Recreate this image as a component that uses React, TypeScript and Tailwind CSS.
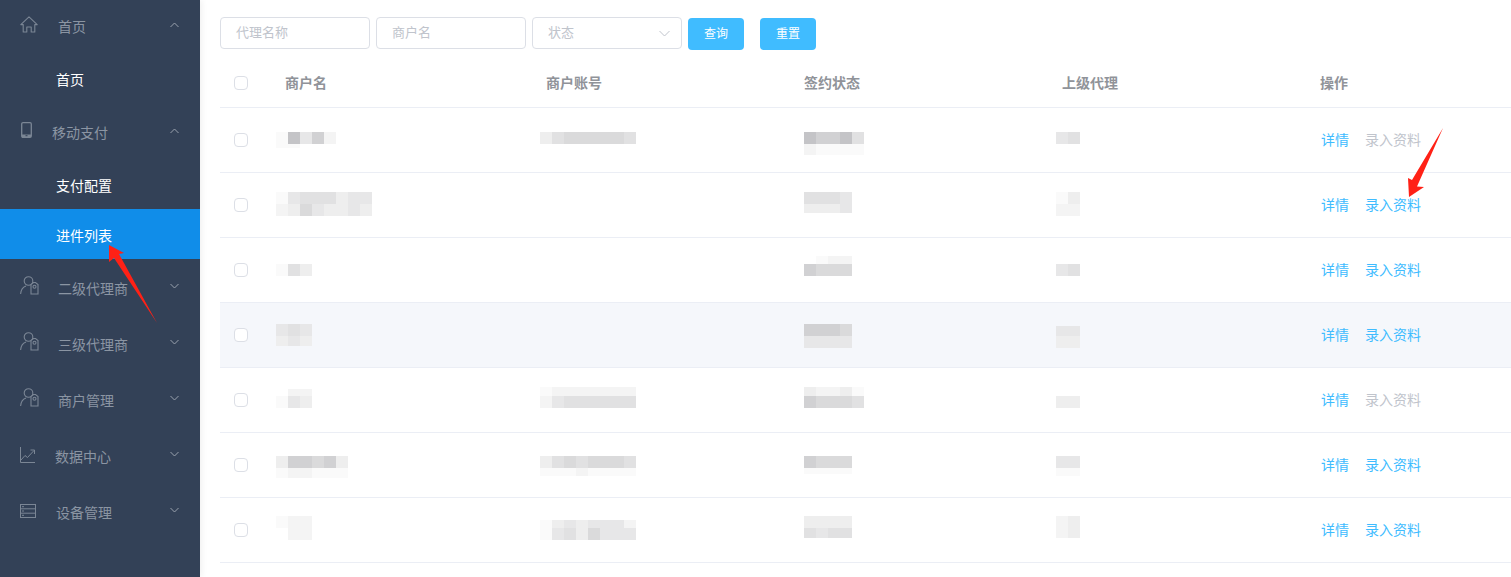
import type { ReactNode } from "react";

const FONT = "font-['Liberation_Sans','Noto_Sans_CJK_SC',sans-serif]";

const tones: Record<string, string> = {
  "0": "bg-transparent",
  a: "bg-[#fafafa]",
  b: "bg-[#f4f4f4]",
  c: "bg-[#eeeeee]",
  d: "bg-[#e7e7e8]",
  e: "bg-[#e1e1e2]",
  f: "bg-[#dadadb]",
  g: "bg-[#d1d1d3]",
  h: "bg-[#c4c4c7]",
};

const heights: Record<string, string> = {
  "4": "h-1",
  "6": "h-1.5",
  "7": "h-[7px]",
  "8": "h-2",
  "9": "h-[9px]",
  "10": "h-2.5",
  "11": "h-[11px]",
  "12": "h-3",
};

// each row is "height:cells", one letter for a 12px mosaic square
function Blur({ rows, className }: { rows: string[]; className: string }) {
  return (
    <div className={className}>
      {rows.map((row, i) => {
        const [h, cells] = row.split(":");
        return (
          <div key={i} className={`flex ${heights[h]}`}>
            {cells.split("").map((c, j) => (
              <div key={j} className={`w-3 ${tones[c]}`} />
            ))}
          </div>
        );
      })}
    </div>
  );
}

const rows = [
  {
    name: { top: "mt-6", rows: ["12:ahdgb", "4:aa"] },
    account: { top: "mt-6", rows: ["12:cefffffe"] },
    status: { top: "mt-6", rows: ["12:hgghe", "11:baaaa"] },
    agent: { top: "mt-6", rows: ["12:de"] },
    active: false,
  },
  {
    name: { top: "mt-[19px]", rows: ["12:adeeecdd", "12:bcfdccdc"] },
    account: null,
    status: { top: "mt-[19px]", rows: ["12:eeed", "9:cccd"] },
    agent: { top: "mt-[19px]", rows: ["12:ac", "12:bb"] },
    active: true,
  },
  {
    name: { top: "mt-[26px]", rows: ["12:aec"] },
    account: null,
    status: { top: "mt-[18px]", rows: ["8:0abb", "12:gfff"] },
    agent: { top: "mt-[26px]", rows: ["12:de"] },
    active: true,
  },
  {
    name: { top: "mt-[21px]", rows: ["12:ded", "10:cdc"] },
    account: null,
    status: { top: "mt-[21px]", rows: ["12:gggf", "12:dddd"] },
    agent: { top: "mt-[23px]", rows: ["10:dd", "12:cc"] },
    active: true,
  },
  {
    name: { top: "mt-[21px]", rows: ["7:0bb", "12:adc"] },
    account: { top: "mt-[19px]", rows: ["9:abbbbbbb", "12:bdeeeeee"] },
    status: { top: "mt-[19px]", rows: ["9:cbbca", "12:gfffe"] },
    agent: { top: "mt-7", rows: ["12:cc"] },
    active: false,
  },
  {
    name: { top: "mt-[23px]", rows: ["12:cggfgc", "10:abbaaa"] },
    account: { top: "mt-[23px]", rows: ["12:cefefffe", "8:aaabaaaa"] },
    status: { top: "mt-[23px]", rows: ["12:gfff", "6:aaaa"] },
    agent: { top: "mt-[23px]", rows: ["12:dd", "8:aa"] },
    active: true,
  },
  {
    name: { top: "mt-[18px]", rows: ["12:abb", "12:0bb"] },
    account: { top: "mt-[22px]", rows: ["8:acdcdddb", "12:adecfddd"] },
    status: { top: "mt-[18px]", rows: ["12:cccc", "10:edee"] },
    agent: { top: "mt-[18px]", rows: ["12:bc", "10:bc"] },
    active: true,
  },
];

const HomeIcon = () => (
  <svg width="18" height="17" viewBox="0 0 18 17" fill="none" stroke="#7b8695" strokeWidth="1.1">
    <path d="M.8 8.6 9 .8l8.200 7.800h-2.400v7.400h-3.600v-5H6.800v5H3.200V8.600z" strokeLinejoin="round" />
  </svg>
);

const PhoneIcon = () => (
  <svg width="11" height="16" viewBox="0 0 11 16" fill="none">
    <rect x=".7" y=".7" width="9.600" height="14.600" rx="1.300" stroke="#7b8695" strokeWidth="1.300" />
    <path d="M1 12.500h9V15H1z" fill="#7b8695" />
    <path d="M4.500 13.700h2" stroke="#334157" />
  </svg>
);

const AgentIcon = () => (
  <svg width="19" height="19" viewBox="0 0 19 19" fill="none" stroke="#7b8695" strokeWidth="1.100">
    <circle cx="8.500" cy="5" r="4.300" />
    <path d="M.6 18c.3-4.200 2.500-7 5.400-8" />
    <path d="M11 8.500l2.500-2 2 0 2.500 2V18h-7z" fill="#334157" />
    <circle cx="14.500" cy="10.800" r="1.500" />
  </svg>
);

const ChartIcon = () => (
  <svg width="16" height="16" viewBox="0 0 16 16" fill="none" stroke="#7b8695" strokeWidth="1">
    <path d="M.5 0v15.500H15" />
    <path d="M1 13l4-4.500 2.500 2L14 3.500M10.500 3h4v4" />
  </svg>
);

const ServerIcon = () => (
  <svg width="16" height="14" viewBox="0 0 16 14" fill="none" stroke="#7b8695" strokeWidth="1">
    <rect x=".5" y=".5" width="15" height="13" />
    <path d="M.5 4.800h15M.5 9.200h15" />
    <path d="M2 2.700h2M2 7h2M2 11.300h2" />
  </svg>
);

function Chevron({ up }: { up?: boolean }) {
  return (
    <svg width="9" height="6" viewBox="0 0 9 6" fill="none" stroke="#9aa2ae" strokeWidth="1">
      <path d={up ? "M.5 5 4.500 1l4 4" : "M.5 1l4 4 4-4"} />
    </svg>
  );
}

function MenuHead({ icon, label, slot, up }: { icon: ReactNode; label: string; slot: string; up?: boolean }) {
  return (
    <div className="flex h-14 pr-[21px] text-sm text-[#8b95a3]">
      <div className={`${slot} shrink-0 pl-5`}>{icon}</div>
      <div className="flex-1 pt-[20px] leading-[20px] whitespace-nowrap">{label}</div>
      <div className={up ? "pt-[25px]" : "pt-6"}>
        <Chevron up={up} />
      </div>
    </div>
  );
}

function SubItem({ label, active }: { label: string; active?: boolean }) {
  return (
    <div className={`h-[50px] pl-14 text-sm leading-[54px] text-white ${active ? "bg-[#108de9]" : ""}`}>{label}</div>
  );
}

function Sidebar() {
  return (
    <aside className="w-[200px] shrink-0 bg-[#334157] overflow-hidden shadow-[2px_0_6px_rgba(0,0,0,0.06)]">
      <div className="-mt-[3px]">
        <MenuHead icon={<div className="pt-[19px]"><HomeIcon /></div>} label="首页" slot="w-[58px]" up />
        <SubItem label="首页" />
        <MenuHead icon={<div className="pl-px pt-[19px]"><PhoneIcon /></div>} label="移动支付" slot="w-[52px]" up />
        <SubItem label="支付配置" />
        <SubItem label="进件列表" active />
        <MenuHead icon={<div className="pt-[17px]"><AgentIcon /></div>} label="二级代理商" slot="w-[58px]" />
        <MenuHead icon={<div className="pt-[17px]"><AgentIcon /></div>} label="三级代理商" slot="w-[58px]" />
        <MenuHead icon={<div className="pt-[17px]"><AgentIcon /></div>} label="商户管理" slot="w-[58px]" />
        <MenuHead icon={<div className="pt-5"><ChartIcon /></div>} label="数据中心" slot="w-[55px]" />
        <MenuHead icon={<div className="pt-[21px]"><ServerIcon /></div>} label="设备管理" slot="w-14" />
      </div>
    </aside>
  );
}

function Field({ text, arrow }: { text: string; arrow?: boolean }) {
  return (
    <div className="flex h-8 w-[150px] items-center justify-between rounded border border-[#dcdfe6] bg-white pl-[15px] pr-[11px] text-[13px] text-[#c0c4cc]">
      {text}
      {arrow && (
        <svg width="11" height="7" viewBox="0 0 11 7" fill="none" stroke="#c0c4cc" strokeWidth="1">
          <path d="M.5 1l5 5 5-5" />
        </svg>
      )}
    </div>
  );
}

function Check() {
  return <div className="h-3.5 w-3.5 rounded-sm border border-[#dcdfe6] bg-white" />;
}

const COLS = "grid grid-cols-[65px_261px_258px_258px_258px_1fr]";

function Table() {
  return (
    <div className="mt-2.5">
      <div className={`${COLS} h-[48px] items-center border-b border-[#ebeef5] pb-px text-sm font-bold text-[#909399]`}>
        <div className="pl-3.5">
          <Check />
        </div>
        <div>商户名</div>
        <div>商户账号</div>
        <div>签约状态</div>
        <div>上级代理</div>
        <div>操作</div>
      </div>
      {rows.map((r, i) => (
        <div key={i} className={`${COLS} h-[65px] border-b border-[#ebeef5] ${i === 3 ? "bg-[#f5f7fb]" : ""}`}>
          <div className="flex items-center pl-3.5">
            <Check />
          </div>
          <div>
            <Blur className={`-ml-[9px] ${r.name.top}`} rows={r.name.rows} />
          </div>
          <div>{r.account && <Blur className={`-ml-1.5 ${r.account.top}`} rows={r.account.rows} />}</div>
          <div>
            <Blur className={r.status.top} rows={r.status.rows} />
          </div>
          <div>
            <Blur className={`-ml-1.5 ${r.agent.top}`} rows={r.agent.rows} />
          </div>
          <div className="flex items-center gap-4 pl-px text-sm text-[#40bcff]">
            <span>详情</span>
            <span className={r.active ? "" : "text-[#c0c4cc]"}>录入资料</span>
          </div>
        </div>
      ))}
    </div>
  );
}

export default function App() {
  return (
    <div className={`relative flex h-[577px] w-[1511px] overflow-hidden bg-white ${FONT}`}>
      <Sidebar />
      <main className="flex-1 pl-5 pt-[17px]">
        <div className="flex items-start gap-1.5">
          <Field text="代理名称" />
          <Field text="商户名" />
          <Field text="状态" arrow />
          <button className="mt-px h-8 w-14 rounded bg-[#40bcff] text-xs text-white">查询</button>
          <button className="mt-px ml-2.5 h-8 w-14 rounded bg-[#40bcff] text-xs text-white">重置</button>
        </div>
        <Table />
      </main>
      <svg className="pointer-events-none absolute inset-0" width="1511" height="577" viewBox="0 0 1511 577" fill="#ff2116">
        <path d="M109 245l15 8-5 1L157 323l-43-65-5 4z" />
        <path d="M1409 197l15-10-7-.5L1443 128l-31 52-4-2z" />
      </svg>
    </div>
  );
}
